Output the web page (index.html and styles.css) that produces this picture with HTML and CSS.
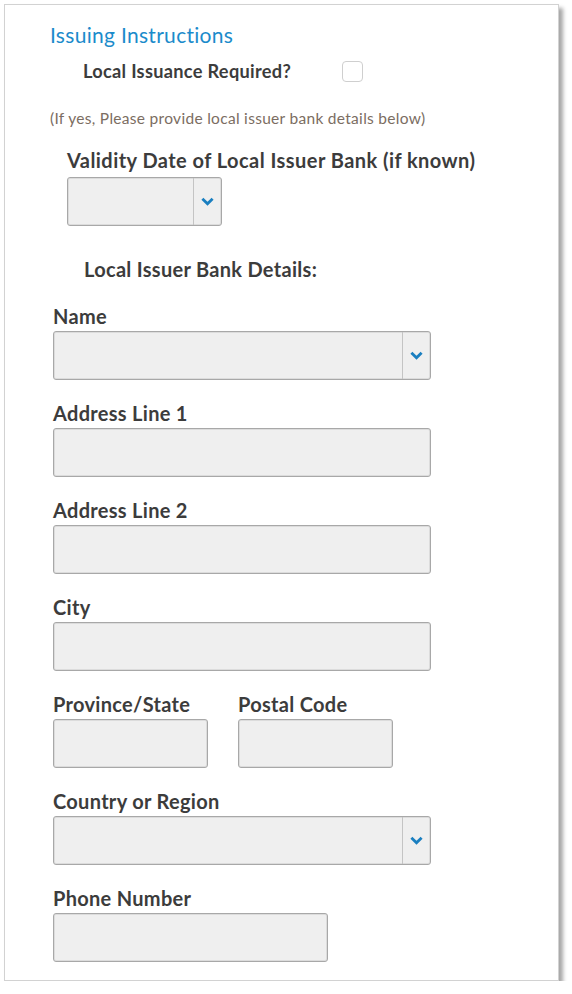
FILE: index.html
```html
<!DOCTYPE html>
<html lang="en">
<head>
    <meta charset="UTF-8">
    <title>Issuing Instructions</title>
    <link rel="stylesheet" href="styles.css">
</head>
<body>
  <div class="panel">
    <h2 class="section-title">Issuing Instructions</h2>

    <div class="check-row">
      <span class="label">Local Issuance Required?</span>
      <span class="checkbox"></span>
    </div>
    <p class="note">(If yes, Please provide local issuer bank details below)</p>

    <div class="validity">
      <div class="label">Validity Date of Local Issuer Bank (if known)</div>
      <div class="box select small">
        <span class="arrow">
          <svg width="13" height="9" viewBox="0 0 13 9"><path d="M1.4 1.8 L6.5 6.8 L11.6 1.8" fill="none" stroke="#1a7fc0" stroke-width="2.8"/></svg>
        </span>
      </div>
    </div>

    <div class="subhead label">Local Issuer Bank Details:</div>

    <div class="field">
      <div class="label">Name</div>
      <div class="box select wide">
        <span class="arrow">
          <svg width="13" height="9" viewBox="0 0 13 9"><path d="M1.4 1.8 L6.5 6.8 L11.6 1.8" fill="none" stroke="#1a7fc0" stroke-width="2.8"/></svg>
        </span>
      </div>
    </div>

    <div class="field">
      <div class="label">Address Line 1</div>
      <div class="box wide"></div>
    </div>

    <div class="field">
      <div class="label">Address Line 2</div>
      <div class="box wide"></div>
    </div>

    <div class="field">
      <div class="label">City</div>
      <div class="box wide"></div>
    </div>

    <div class="field-row">
      <div class="field">
        <div class="label">Province/State</div>
        <div class="box small"></div>
      </div>
      <div class="field">
        <div class="label">Postal Code</div>
        <div class="box small"></div>
      </div>
    </div>

    <div class="field">
      <div class="label">Country or Region</div>
      <div class="box select wide">
        <span class="arrow">
          <svg width="13" height="9" viewBox="0 0 13 9"><path d="M1.4 1.8 L6.5 6.8 L11.6 1.8" fill="none" stroke="#1a7fc0" stroke-width="2.8"/></svg>
        </span>
      </div>
    </div>

    <div class="field">
      <div class="label">Phone Number</div>
      <div class="box phone"></div>
    </div>
  </div>
</body>
</html>
```

FILE: styles.css
```css
body {
    margin: 0;
    background-color: #ffffff;
    font-family: Lato, "Liberation Sans", sans-serif;
}

/* outer card */
.panel {
    margin: 4px 0 0 4px;
    width: 555px;
    height: 977px;
    border: 1px solid #d2d2d2;
    box-shadow: 4px 4px 4px rgba(0, 0, 0, 0.35);
    padding: 18px 0 0 45px;
    box-sizing: border-box;
}

.section-title {
    margin: 0;
    font-size: 21px;
    font-weight: 400;
    letter-spacing: 0.3px;
    line-height: 24px;
    color: #1b8bcb;
}

.label {
    font-size: 20px;
    font-weight: 700;
    letter-spacing: 0.3px;
    line-height: 22px;
    color: #3c3c3c;
}

/* checkbox row */
.check-row {
    display: flex;
    align-items: center;
    margin: 13px 0 0 33px;
}

.check-row .label {
    font-size: 18.2px;
}

.checkbox {
    width: 21px;
    height: 21px;
    margin-left: 51px;
    border: 1px solid #cfcfcf;
    border-radius: 4px;
    box-sizing: border-box;
}

.note {
    margin: 27px 0 0 0;
    font-size: 15.5px;
    letter-spacing: 0.3px;
    line-height: 18px;
    color: #7b6d62;
}

.validity {
    margin: 22px 0 0 17px;
}

.validity .label {
    margin-bottom: 6px;
    letter-spacing: 0.45px;
}

.subhead {
    margin: 32px 0 0 34px;
}

/* form fields */
.field {
    margin: 22px 0 0 3px;
}

.subhead + .field {
    margin-top: 25px;
}

.field .label {
    margin-bottom: 4px;
}

.field-row {
    display: flex;
    gap: 27px;
}

.box {
    position: relative;
    height: 49px;
    background-color: #efefef;
    border: 1px solid #a8a8a8;
    border-radius: 3px;
    box-shadow: inset 0 0 0 1px #dcdcdc;
    box-sizing: border-box;
}

.wide {
    width: 378px;
}

.small {
    width: 155px;
}

.phone {
    width: 275px;
}

.select .arrow {
    position: absolute;
    top: 0;
    right: 0;
    bottom: 0;
    width: 27px;
    border-left: 1px solid #c4c4c4;
    display: flex;
    align-items: center;
    justify-content: center;
}

.select .arrow svg {
    display: block;
}
```
